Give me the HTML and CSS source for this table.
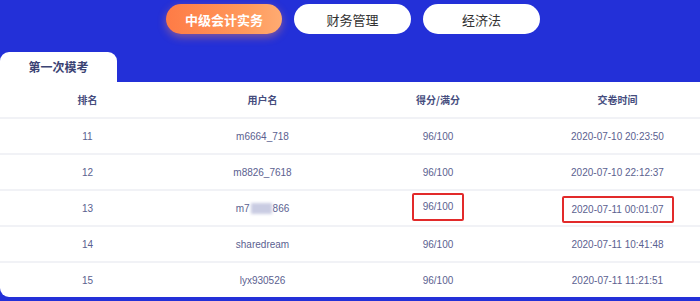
FILE: index.html
```html
<!DOCTYPE html>
<html lang="zh-CN">
<head>
<meta charset="utf-8">
<title>模考排名</title>
<link rel="stylesheet" href="styles.css">
</head>
<body>
<div class="page">
  <nav class="subjects">
    <a class="pill active">中级会计实务</a>
    <a class="pill">财务管理</a>
    <a class="pill">经济法</a>
  </nav>
  <div class="tabbar">
    <div class="tab">第一次模考</div>
  </div>
  <div class="board">
    <div class="row head">
      <div>排名</div><div>用户名</div><div>得分/满分</div><div>交卷时间</div>
    </div>
    <div class="row">
      <div>11</div><div>m6664_718</div><div>96/100</div><div>2020-07-10 20:23:50</div>
    </div>
    <div class="row">
      <div>12</div><div>m8826_7618</div><div>96/100</div><div>2020-07-10 22:12:37</div>
    </div>
    <div class="row">
      <div>13</div><div>m7<span class="blur"></span>866</div><div><span class="mark m1">96/100</span></div><div><span class="mark m2">2020-07-11 00:01:07</span></div>
    </div>
    <div class="row">
      <div>14</div><div>sharedream</div><div>96/100</div><div>2020-07-11 10:41:48</div>
    </div>
    <div class="row">
      <div>15</div><div>lyx930526</div><div>96/100</div><div>2020-07-11 11:21:51</div>
    </div>
  </div>
</div>
</body>
</html>
```
FILE: styles.css
```css
html, body {
  margin: 0;
  padding: 0;
}
body {
  background: #2330d8;
  font-family: "Liberation Sans", "Noto Sans CJK SC", sans-serif;
  width: 700px;
  height: 301px;
  overflow: hidden;
}
.page {
  display: flex;
  flex-direction: column;
}
.subjects {
  display: flex;
  justify-content: center;
  gap: 12px;
  padding: 4px 0 0 6px;
  height: 31px;
}
.pill {
  width: 117px;
  height: 30px;
  border-radius: 15px;
  background: #fff;
  color: #333;
  font-family: "Noto Sans CJK SC", sans-serif;
  font-size: 13px;
  display: flex;
  align-items: center;
  justify-content: center;
}
.pill.active {
  width: 116px;
  background: linear-gradient(90deg, #fe7b46 0%, #ff9a5c 70%, #ffab72 100%);
  color: #fff;
  font-weight: 700;
  box-shadow: 0 3px 8px rgba(255, 140, 80, 0.45);
}
.tabbar {
  display: flex;
  padding-top: 17px;
}
.tab {
  width: 117px;
  height: 30px;
  background: #fff;
  border-radius: 9px 9px 0 0;
  color: #3b4374;
  font-family: "Noto Sans CJK SC", sans-serif;
  font-weight: 700;
  font-size: 12px;
  display: flex;
  align-items: center;
  justify-content: center;
  padding-bottom: 2px;
  box-sizing: border-box;
}
.board {
  background: #fff;
  border-radius: 0 0 0 9px;
  height: 215px;
}
.row {
  display: grid;
  grid-template-columns: repeat(4, 1fr);
  height: 36px;
  align-items: center;
  border-top: 2px solid #f1f2f6;
  box-sizing: border-box;
  color: #5b6190;
  font-size: 10px;
}
.row > div {
  white-space: nowrap;
  display: flex;
  align-items: center;
  justify-content: center;
}
.row.head {
  height: 35px;
  border-top: none;
  color: #464d7e;
  font-family: "Noto Sans CJK SC", sans-serif;
  font-weight: 700;
  font-size: 10px;
}
.row > div:nth-child(3) { padding-left: 1px; }
.row > div:nth-child(4) { padding-left: 10px; }
.blur {
  display: inline-block;
  width: 21px;
  height: 11px;
  background: #c9cce2;
  filter: blur(1.5px);
  margin: 0 1px;
}
.mark {
  border: 2px solid #e22a2a;
  border-radius: 2px;
  display: inline-flex;
  align-items: center;
  justify-content: center;
  box-sizing: border-box;
}
.mark.m1 {
  width: 52px;
  height: 28px;
  margin-top: -3px;
}
.mark.m2 {
  width: 112px;
  height: 27px;
  margin-top: 2px;
}
```
